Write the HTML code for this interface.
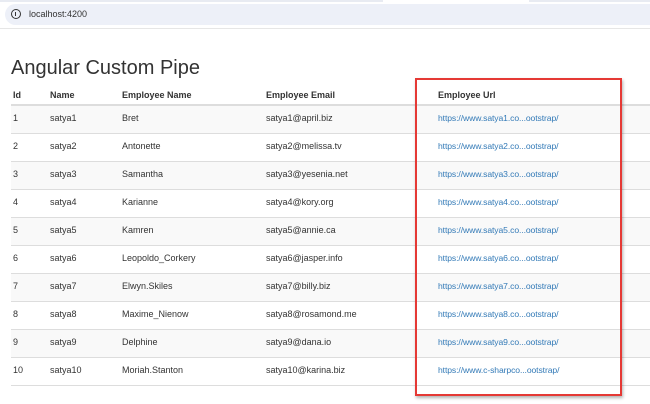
<!DOCTYPE html>
<html><head><style>
*{margin:0;padding:0;box-sizing:border-box}
body{width:650px;height:404px;overflow:hidden;background:#fff;font-family:"Liberation Sans",Arial,sans-serif;color:#333;position:relative}
.top{position:absolute;left:0;top:0;width:650px;height:2px;background:#e8ebf2}
.top2{position:absolute;left:383px;top:0;width:146px;height:2px;background:#fff}
.bar{position:absolute;left:5px;top:4px;width:660px;height:21px;background:#edf0f8;border-radius:11px}
.ic{position:absolute;left:11px;top:9px;width:10px;height:10px;border:1.3px solid #333;border-radius:50%}
.ic:after{content:"";position:absolute;left:3px;top:1.5px;width:1.3px;height:4px;background:#333}
.url{position:absolute;left:29px;top:9px;font-size:9px;color:#333}
.line{position:absolute;left:0;top:28px;width:650px;height:1px;background:#e6e6e6}
h1{position:absolute;left:11px;top:57px;font-size:20px;font-weight:normal;color:#333}
table{position:absolute;left:11px;top:85px;width:660px;border-collapse:collapse;font-size:9px}
th{text-align:left;font-weight:bold;height:20px;border-bottom:2px solid #ddd;padding:0 0 0 2px;vertical-align:middle}
td{height:28px;border-bottom:1px solid #ddd;padding:0 0 3px 2px;vertical-align:middle}
tr.s td{background:#f9f9f9}
a{color:#337ab7;text-decoration:none;font-size:8.6px;letter-spacing:-0.1px}
.red{position:absolute;left:415px;top:78px;width:207px;height:318px;border:2px solid #e53935;box-shadow:1px 2px 3px rgba(0,0,0,.3)}
</style></head><body>
<div class="top"></div><div class="top2"></div>
<div class="bar"></div><div class="ic"></div><div class="url">localhost:4200</div>
<div class="line"></div>
<h1>Angular Custom Pipe</h1>
<table>
<colgroup><col style="width:37px"><col style="width:72px"><col style="width:144px"><col style="width:172px"><col></colgroup>
<tr><th>Id</th><th>Name</th><th>Employee Name</th><th>Employee Email</th><th>Employee Url</th></tr>
<tr class="s"><td>1</td><td>satya1</td><td>Bret</td><td>satya1@april.biz</td><td><a>https://www.satya1.co...ootstrap/</a></td></tr>
<tr><td>2</td><td>satya2</td><td>Antonette</td><td>satya2@melissa.tv</td><td><a>https://www.satya2.co...ootstrap/</a></td></tr>
<tr class="s"><td>3</td><td>satya3</td><td>Samantha</td><td>satya3@yesenia.net</td><td><a>https://www.satya3.co...ootstrap/</a></td></tr>
<tr><td>4</td><td>satya4</td><td>Karianne</td><td>satya4@kory.org</td><td><a>https://www.satya4.co...ootstrap/</a></td></tr>
<tr class="s"><td>5</td><td>satya5</td><td>Kamren</td><td>satya5@annie.ca</td><td><a>https://www.satya5.co...ootstrap/</a></td></tr>
<tr><td>6</td><td>satya6</td><td>Leopoldo_Corkery</td><td>satya6@jasper.info</td><td><a>https://www.satya6.co...ootstrap/</a></td></tr>
<tr class="s"><td>7</td><td>satya7</td><td>Elwyn.Skiles</td><td>satya7@billy.biz</td><td><a>https://www.satya7.co...ootstrap/</a></td></tr>
<tr><td>8</td><td>satya8</td><td>Maxime_Nienow</td><td>satya8@rosamond.me</td><td><a>https://www.satya8.co...ootstrap/</a></td></tr>
<tr class="s"><td>9</td><td>satya9</td><td>Delphine</td><td>satya9@dana.io</td><td><a>https://www.satya9.co...ootstrap/</a></td></tr>
<tr><td>10</td><td>satya10</td><td>Moriah.Stanton</td><td>satya10@karina.biz</td><td><a>https://www.c-sharpco...ootstrap/</a></td></tr>
</table>
<div class="red"></div>
</body></html>
